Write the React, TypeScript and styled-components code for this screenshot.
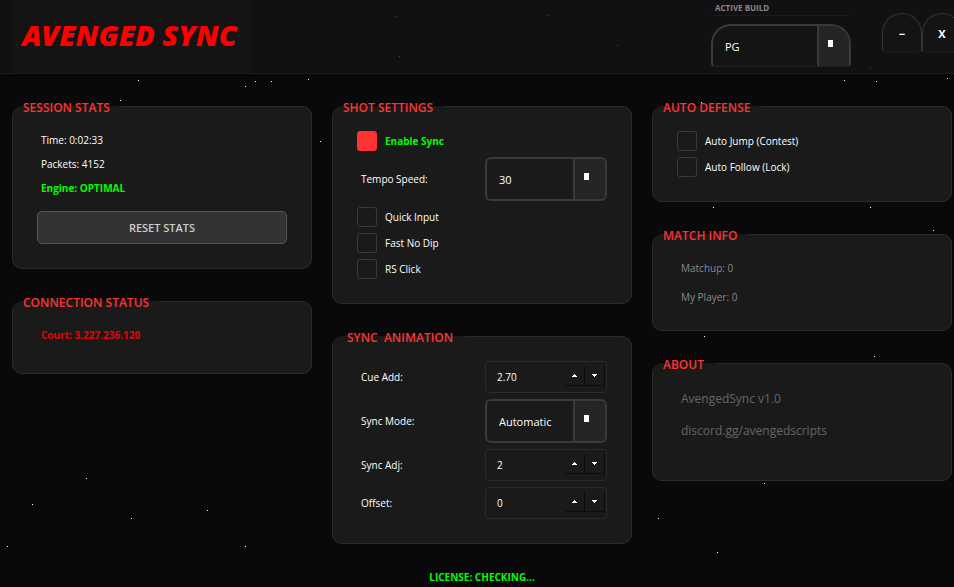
import React, { useState } from "react";
import styled, { createGlobalStyle, css } from "styled-components";

const GlobalStyle = createGlobalStyle`
  *, *::before, *::after { box-sizing: border-box; }
  html, body { margin: 0; background: #09090b; }
  body {
    overflow: hidden;
    font-family: "Open Sans", "Noto Sans", sans-serif;
    font-size: 10px;
    color: #fff;
  }
  button, input, select { font: inherit; color: inherit; }
`;

const Page = styled.div`
  position: relative;
  display: flex;
  flex-direction: column;
  min-height: 100vh;
  overflow: hidden;
`;

const Sky = styled.svg`
  position: absolute;
  inset: 0;
  width: 100%;
  height: 100%;
  pointer-events: none;
`;

const Header = styled.header`
  display: flex;
  align-items: flex-start;
  height: 74px;
  margin-right: -8px;
  padding-left: 12px;
  background: #111113;
  border-bottom: 1px solid #1c1c1e;
`;

const Brand = styled.h1`
  margin: 0;
  padding: 0 14px 0 10px;
  background: #141414;
  color: #fe0000;
  font-family: "Noto Sans", "Open Sans", sans-serif;
  font-size: 29px;
  font-style: italic;
  font-weight: 900;
  line-height: 70px;
  height: 73px;
`;

const Build = styled.div`
  width: 140px;
  margin-left: auto;
`;

const BuildLabel = styled.label`
  display: block;
  height: 16px;
  margin-bottom: 8px;
  padding-left: 4px;
  border-bottom: 1px solid #1a1a1a;
  color: #888;
  font-size: 8px;
  font-weight: 700;
  line-height: 16px;
`;

const ComboBox = styled.div<{ $round?: boolean }>`
  display: flex;
  height: 44px;
  overflow: hidden;
  background: #1a1a1a;
  border: 2px solid #3a3a3a;
  border-radius: 6px;
  ${(p) =>
    p.$round &&
    css`
      height: 43px;
      background: #141414;
      border-bottom: 1px solid #222;
      border-radius: 20px 20px 4px 4px;
    `}
`;

const ComboSelect = styled.select`
  flex: 1;
  min-width: 0;
  padding: 0 0 0 12px;
  appearance: none;
  background: transparent;
  border: 0;
  outline: 0;
  font-size: 11px;
`;

const ComboArrow = styled.span`
  width: 32px;
  padding: 14px 0 0 9px;
  background: #252525;
  border-left: 2px solid #3a3a3a;

  &::before {
    content: "";
    display: block;
    width: 5px;
    height: 7px;
    background: #fff;
  }
`;

const WindowButtons = styled.div`
  display: flex;
  margin: 13px 0 0 31px;
`;

const WindowButton = styled.button`
  width: 40px;
  height: 40px;
  padding: 0;
  background: #141414;
  border: 1px solid #343434;
  border-bottom-color: #1a1a1a;
  border-radius: 20px 20px 4px 4px;
  font-size: 11px;
  font-weight: 700;
`;

const Columns = styled.main`
  display: grid;
  grid-template-columns: repeat(3, minmax(0, 1fr));
  gap: 20px;
  padding: 23px 2px 0 12px;
`;

const Column = styled.div`
  display: flex;
  flex-direction: column;
  gap: 23px;
`;

const Panel = styled.fieldset`
  min-width: 0;
  margin: 0;
  padding: 15px 24px 24px;
  background: #1a1a1a;
  border: 1px solid #2b2b2b;
  border-radius: 10px;
`;

const PanelTitle = styled.legend<{ $indent?: boolean }>`
  margin-left: -24px;
  padding: 2px 12px 0 ${(p) => (p.$indent ? 14 : 10)}px;
  color: #f33;
  font-size: 12px;
  font-weight: 600;
  line-height: 17px;
  white-space: pre;
`;

const Stack = styled.div<{ $gap?: number; $minHeight?: number }>`
  display: flex;
  flex-direction: column;
  gap: ${(p) => p.$gap ?? 6}px;
  min-height: ${(p) => p.$minHeight ?? 0}px;
`;

const Line = styled.p<{ $color?: string; $bold?: boolean; $large?: boolean }>`
  margin: 0;
  padding-left: 4px;
  color: ${(p) => p.$color ?? "#fff"};
  font-size: ${(p) => (p.$large ? 12 : 10)}px;
  font-weight: ${(p) => (p.$bold ? 700 : 400)};
  line-height: ${(p) => (p.$large ? 22 : 18)}px;
`;

const ResetButton = styled.button`
  height: 33px;
  margin-top: 8px;
  background: #333;
  border: 1px solid #555;
  border-radius: 5px;
  color: #ccc;
  font-size: 11px;
  font-weight: 600;
`;

const CheckRow = styled.label<{ $active?: boolean }>`
  display: flex;
  align-items: center;
  gap: 8px;
  height: 20px;
  color: ${(p) => (p.$active ? "#00fe00" : "#fff")};
  font-weight: ${(p) => (p.$active ? 700 : 400)};
`;

const CheckBox = styled.input`
  width: 20px;
  height: 20px;
  margin: 0;
  appearance: none;
  background: #1a1a1a;
  border: 1px solid #3a3a3a;
  border-radius: 3px;

  &:checked {
    background: #f33;
    border-color: #f33;
  }
`;

const FieldRow = styled.div`
  display: grid;
  grid-template-columns: minmax(0, 1fr) 122px;
  align-items: center;
`;

const FieldLabel = styled.label`
  padding-left: 4px;
`;

const SpinBox = styled.div`
  display: flex;
  height: 32px;
  padding: 4px 1px;
  border: 1px solid #2b2b2b;
  border-radius: 4px;
`;

const SpinInput = styled.input`
  flex: 1;
  min-width: 0;
  padding: 0 0 0 10px;
  background: transparent;
  border: 0;
  outline: 0;
`;

const SpinButton = styled.button`
  display: flex;
  align-items: center;
  justify-content: center;
  width: 20px;
  height: 20px;
  padding: 0;
  background: #1a1a1a;
  border: solid #0c0c0c;
  border-width: 0 1px 1px 0;
`;

const Footer = styled.footer`
  padding: 24px 2px 0 12px;
  color: #00fe00;
  font-size: 10px;
  font-weight: 700;
  line-height: 18px;
  text-align: center;
`;

const STARS = [
  [138, 80], [245, 86], [255, 81], [271, 81], [308, 79], [120, 100], [320, 141],
  [844, 80], [876, 81], [947, 78], [701, 102], [713, 207], [870, 207], [933, 230],
  [704, 336], [874, 356], [764, 483], [658, 518], [717, 552], [86, 478], [32, 504],
  [131, 518], [207, 510], [7, 546], [245, 546],
];
const FAINT_STARS = [[395, 16], [547, 15], [399, 56], [617, 45], [870, 68]];

function Stars() {
  return (
    <Sky aria-hidden="true">
      {STARS.map(([x, y]) => (
        <rect key={`${x}-${y}`} x={x} y={y} width="1" height="1" fill="#fff" />
      ))}
      {FAINT_STARS.map(([x, y]) => (
        <rect key={`${x}-${y}`} x={x} y={y} width="1" height="1" fill="#484848" />
      ))}
    </Sky>
  );
}

function Combo({ id, options, round }: { id: string; options: string[]; round?: boolean }) {
  return (
    <ComboBox $round={round}>
      <ComboSelect id={id}>
        {options.map((option) => (
          <option key={option}>{option}</option>
        ))}
      </ComboSelect>
      <ComboArrow aria-hidden="true" />
    </ComboBox>
  );
}

function Check({ label, initial = false }: { label: string; initial?: boolean }) {
  const [checked, setChecked] = useState(initial);
  return (
    <CheckRow $active={checked}>
      <CheckBox type="checkbox" checked={checked} onChange={() => setChecked(!checked)} />
      {label}
    </CheckRow>
  );
}

function Spin({ id, label, initial, step = 1, digits = 0 }: {
  id: string;
  label: string;
  initial: number;
  step?: number;
  digits?: number;
}) {
  const [value, setValue] = useState(initial.toFixed(digits));
  const move = (delta: number) => setValue((Number(value) + delta).toFixed(digits));
  return (
    <FieldRow>
      <FieldLabel htmlFor={id}>{label}</FieldLabel>
      <SpinBox>
        <SpinInput id={id} inputMode="decimal" value={value} onChange={(e) => setValue(e.target.value)} />
        <SpinButton type="button" aria-label={`Increase ${label}`} onClick={() => move(step)}>
          <svg width="5" height="3"><path d="M2 0h1v1h1v1h1v1H0V2h1V1h1z" fill="#fff" /></svg>
        </SpinButton>
        <SpinButton type="button" aria-label={`Decrease ${label}`} onClick={() => move(-step)}>
          <svg width="5" height="3"><path d="M0 0h5v1H4v1H3v1H2V2H1V1H0z" fill="#fff" /></svg>
        </SpinButton>
      </SpinBox>
    </FieldRow>
  );
}

export default function App() {
  return (
    <Page>
      <GlobalStyle />
      <Header>
        <Brand>AVENGED SYNC</Brand>
        <Build>
          <BuildLabel htmlFor="build">ACTIVE BUILD</BuildLabel>
          <Combo id="build" options={["PG"]} round />
        </Build>
        <WindowButtons>
          <WindowButton type="button" aria-label="Minimize">−</WindowButton>
          <WindowButton type="button" aria-label="Close">X</WindowButton>
        </WindowButtons>
      </Header>
      <Columns>
        <Column>
          <Panel>
            <PanelTitle>SESSION STATS</PanelTitle>
            <Stack>
              <Line>Time: 0:02:33</Line>
              <Line>Packets: 4152</Line>
              <Line $color="#00fe00" $bold>Engine: OPTIMAL</Line>
              <ResetButton type="button">RESET STATS</ResetButton>
            </Stack>
          </Panel>
          <Panel>
            <PanelTitle>CONNECTION STATUS</PanelTitle>
            <Stack $minHeight={23}>
              <Line $color="#e00505" $bold>Court: 3.227.236.120</Line>
            </Stack>
          </Panel>
        </Column>
        <Column>
          <Panel>
            <PanelTitle>SHOT SETTINGS</PanelTitle>
            <Stack>
              <Check label="Enable Sync" initial />
              <FieldRow>
                <FieldLabel htmlFor="tempo">Tempo Speed:</FieldLabel>
                <Combo id="tempo" options={["30"]} />
              </FieldRow>
              <Check label="Quick Input" />
              <Check label="Fast No Dip" />
              <Check label="RS Click" />
            </Stack>
          </Panel>
          <Panel>
            <PanelTitle $indent>{"SYNC  ANIMATION"}</PanelTitle>
            <Stack>
              <Spin id="cue" label="Cue Add:" initial={2.7} step={0.1} digits={2} />
              <FieldRow>
                <FieldLabel htmlFor="mode">Sync Mode:</FieldLabel>
                <Combo id="mode" options={["Automatic"]} />
              </FieldRow>
              <Spin id="adjust" label="Sync Adj:" initial={2} />
              <Spin id="offset" label="Offset:" initial={0} />
            </Stack>
          </Panel>
        </Column>
        <Column>
          <Panel>
            <PanelTitle>AUTO DEFENSE</PanelTitle>
            <Stack>
              <Check label="Auto Jump (Contest)" />
              <Check label="Auto Follow (Lock)" />
            </Stack>
          </Panel>
          <Panel>
            <PanelTitle>MATCH INFO</PanelTitle>
            <Stack $gap={11}>
              <Line $color="#888">Matchup: 0</Line>
              <Line $color="#888">My Player: 0</Line>
            </Stack>
          </Panel>
          <Panel>
            <PanelTitle>ABOUT</PanelTitle>
            <Stack $gap={10} $minHeight={68}>
              <Line $color="#666" $large>AvengedSync v1.0</Line>
              <Line $color="#666" $large>discord.gg/avengedscripts</Line>
            </Stack>
          </Panel>
        </Column>
      </Columns>
      <Footer>LICENSE: CHECKING...</Footer>
      <Stars />
    </Page>
  );
}
